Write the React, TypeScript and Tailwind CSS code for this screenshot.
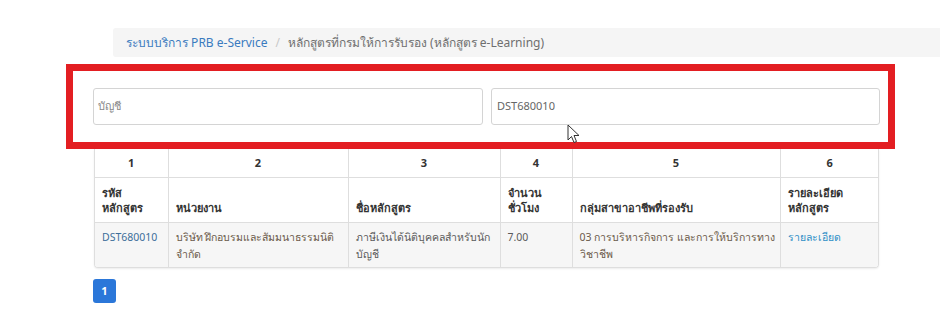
const font = { fontFamily: '"Noto Sans", "Open Sans", sans-serif' };

const cols = [
  { n: "1", label: ["รหัส", "หลักสูตร"], w: "w-[73px]" },
  { n: "2", label: ["หน่วยงาน"], w: "w-[180px]" },
  { n: "3", label: ["ชื่อหลักสูตร"], w: "w-[152px]" },
  { n: "4", label: ["จำนวน", "ชั่วโมง"], w: "w-[72px]" },
  { n: "5", label: ["กลุ่มสาขาอาชีพที่รองรับ"], w: "w-[208px]" },
  { n: "6", label: ["รายละเอียด", "หลักสูตร"], w: "w-[99px]" },
];

const Cursor = () => (
  <svg
    className="absolute left-[567px] top-[124px]"
    width="13"
    height="20"
    viewBox="0 0 13 20"
  >
    <path
      d="M1 1 L1 16 L4.5 12.5 L7 18.5 L9.5 17.5 L7 11.5 L12 11.5 Z"
      fill="#fff"
      stroke="#333"
      strokeWidth="1"
      strokeLinejoin="round"
    />
  </svg>
);

const Lines = ({ lines }: { lines: string[] }) => (
  <>
    {lines.map((l) => (
      <div key={l} className="whitespace-nowrap">
        {l}
      </div>
    ))}
  </>
);

export default function App() {
  return (
    <div className="relative h-[324px] w-[940px] bg-white text-[#333]" style={font}>
      <div className="pt-[28px] pl-[113px]">
        <div className="flex h-[29px] items-center gap-2 rounded-l-[3px] bg-[#f5f5f5] pl-[13px] text-[12px]">
          <span className="text-[#3a7bbf]">ระบบบริการ PRB e-Service</span>
          <span className="text-[#c8c8c8]">/</span>
          <span className="text-[#6f6f6f]">หลักสูตรที่กรมให้การรับรอง (หลักสูตร e-Learning)</span>
        </div>
      </div>

      <div className="mt-[7px] ml-[66px] w-[829px] border-[7px] border-[#e31e22] pt-[17px] pr-[8px] pb-[17px] pl-[20px]">
        <div className="flex gap-2">
          <div className="flex h-[37px] w-[390px] items-center rounded-[3px] border border-[#d4d4d4] px-[4px] text-[11px] text-[#888]">
            บัญชี
          </div>
          <div className="flex h-[37px] w-[389px] items-center rounded-[3px] border border-[#d4d4d4] px-[5px] text-[11px] text-[#666]">
            DST680010
          </div>
        </div>
      </div>

      <div className="ml-[94px] w-[785px] overflow-hidden rounded-b-[4px] border-x border-b border-[#dedede] shadow-[0_1px_2px_rgba(0,0,0,0.08)]">
        <table className="w-full table-fixed border-collapse text-[11px]">
          <thead>
            <tr className="h-[28px]">
              {cols.map((c, i) => (
                <th
                  key={c.n}
                  className={`${c.w} border-b border-[#dedede] text-center font-bold ${i > 0 ? "border-l" : ""}`}
                >
                  {c.n}
                </th>
              ))}
            </tr>
            <tr className="h-[45px]">
              {cols.map((c, i) => (
                <th
                  key={c.n}
                  className={`border-b border-[#dedede] px-[7px] pb-[7px] text-left align-bottom font-bold leading-[15px] ${i > 0 ? "border-l" : ""}`}
                >
                  <Lines lines={c.label} />
                </th>
              ))}
            </tr>
          </thead>
          <tbody>
            <tr className="h-[45px] bg-[#f6f6f6] align-top text-[10.5px] leading-[17px]">
              <td className="px-[7px] pt-[6px] text-[#3d6e9a]">DST680010</td>
              <td className="border-l border-[#dedede] px-[7px] pt-[6px] text-[#6b5a4a]">
                <Lines lines={["บริษัท ฝึกอบรมและสัมมนาธรรมนิติ", "จำกัด"]} />
              </td>
              <td className="border-l border-[#dedede] px-[7px] pt-[6px] text-[#5a5a5a]">
                <Lines lines={["ภาษีเงินได้นิติบุคคลสำหรับนัก", "บัญชี"]} />
              </td>
              <td className="border-l border-[#dedede] px-[7px] pt-[6px] text-[#5a5a5a]">7.00</td>
              <td className="border-l border-[#dedede] px-[7px] pt-[6px] text-[#6b5a4a]">
                <Lines lines={["03 การบริหารกิจการ และการให้บริการทาง", "วิชาชีพ"]} />
              </td>
              <td className="border-l border-[#dedede] px-[7px] pt-[6px] text-[#2f8fc6]">รายละเอียด</td>
            </tr>
          </tbody>
        </table>
      </div>

      <div className="mt-[11px] ml-[93px]">
        <div className="flex h-[24px] w-[23px] items-center justify-center rounded-[3px] bg-[#2b77d9] text-[11px] font-bold text-white">
          1
        </div>
      </div>

      <Cursor />
    </div>
  );
}
